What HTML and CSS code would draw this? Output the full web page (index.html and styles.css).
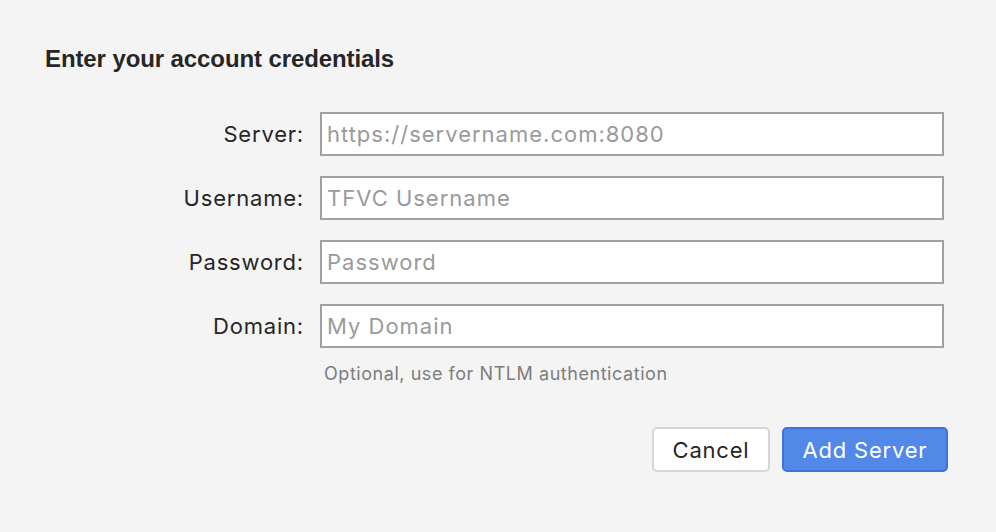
FILE: index.html
```html
<!DOCTYPE html>
<html>
<head>
<meta charset="utf-8">
<link rel="stylesheet" href="styles.css">
</head>
<body>
<div class="dialog">
  <h1 class="title">Enter your account credentials</h1>
  <form class="form">
    <label class="label" for="server">Server:</label>
    <input class="field" id="server" type="text" placeholder="https://servername.com:8080">
    <label class="label" for="user">Username:</label>
    <input class="field" id="user" type="text" placeholder="TFVC Username">
    <label class="label" for="pass">Password:</label>
    <input class="field" id="pass" type="text" placeholder="Password">
    <label class="label" for="domain">Domain:</label>
    <div class="fieldwrap">
      <input class="field" id="domain" type="text" placeholder="My Domain">
      <div class="hint">Optional, use for NTLM authentication</div>
    </div>
  </form>
  <div class="actions">
    <button class="btn cancel" type="button">Cancel</button>
    <button class="btn primary" type="button">Add Server</button>
  </div>
</div>
</body>
</html>
```
FILE: styles.css
```css
html, body {
  margin: 0;
  padding: 0;
  background: #f4f4f4;
}
body {
  width: 996px;
  height: 532px;
  overflow: hidden;
  font-family: Inter, "Liberation Sans", sans-serif;
  color: #262626;
}
.dialog {
  padding-top: 45px;
}
.title {
  margin: 0 0 0 45px;
  font-family: "Liberation Sans", Arial, sans-serif;
  font-weight: bold;
  font-size: 24px;
  letter-spacing: -0.1px;
  line-height: 28px;
  color: #262626;
}
.form {
  margin-top: 39px;
  display: grid;
  grid-template-columns: 304px 624px;
  column-gap: 16px;
  row-gap: 20px;
  align-items: start;
}
.label {
  text-align: right;
  font-size: 22px;
  letter-spacing: 0.8px;
  line-height: 44px;
  height: 44px;
  color: #262626;
}
.field {
  box-sizing: border-box;
  width: 624px;
  height: 44px;
  margin: 0;
  border: 2px solid #a0a0a0;
  border-radius: 0;
  background: #fff;
  padding: 0 5px;
  font-family: Inter, "Liberation Sans", sans-serif;
  font-size: 22px;
  letter-spacing: 1px;
  color: #262626;
  outline: none;
  display: block;
}
.field::placeholder {
  color: #9a9a9a;
}
.hint {
  margin-top: 15px;
  padding-left: 4px;
  font-size: 18px;
  letter-spacing: 0.55px;
  line-height: 22px;
  color: #7d7d7d;
}
.actions {
  margin-top: 42px;
  width: 948px;
  display: flex;
  justify-content: flex-end;
  gap: 12px;
}
.btn {
  box-sizing: border-box;
  height: 45px;
  border-radius: 5px;
  font-family: Inter, "Liberation Sans", sans-serif;
  font-size: 22px;
  letter-spacing: 0.8px;
  padding: 0;
}
.cancel {
  width: 118px;
  background: #fff;
  border: 2px solid #d6d6d6;
  color: #262626;
}
.primary {
  width: 166px;
  background: #5289e9;
  border: 2px solid #3f73d6;
  color: #fff;
}
```
